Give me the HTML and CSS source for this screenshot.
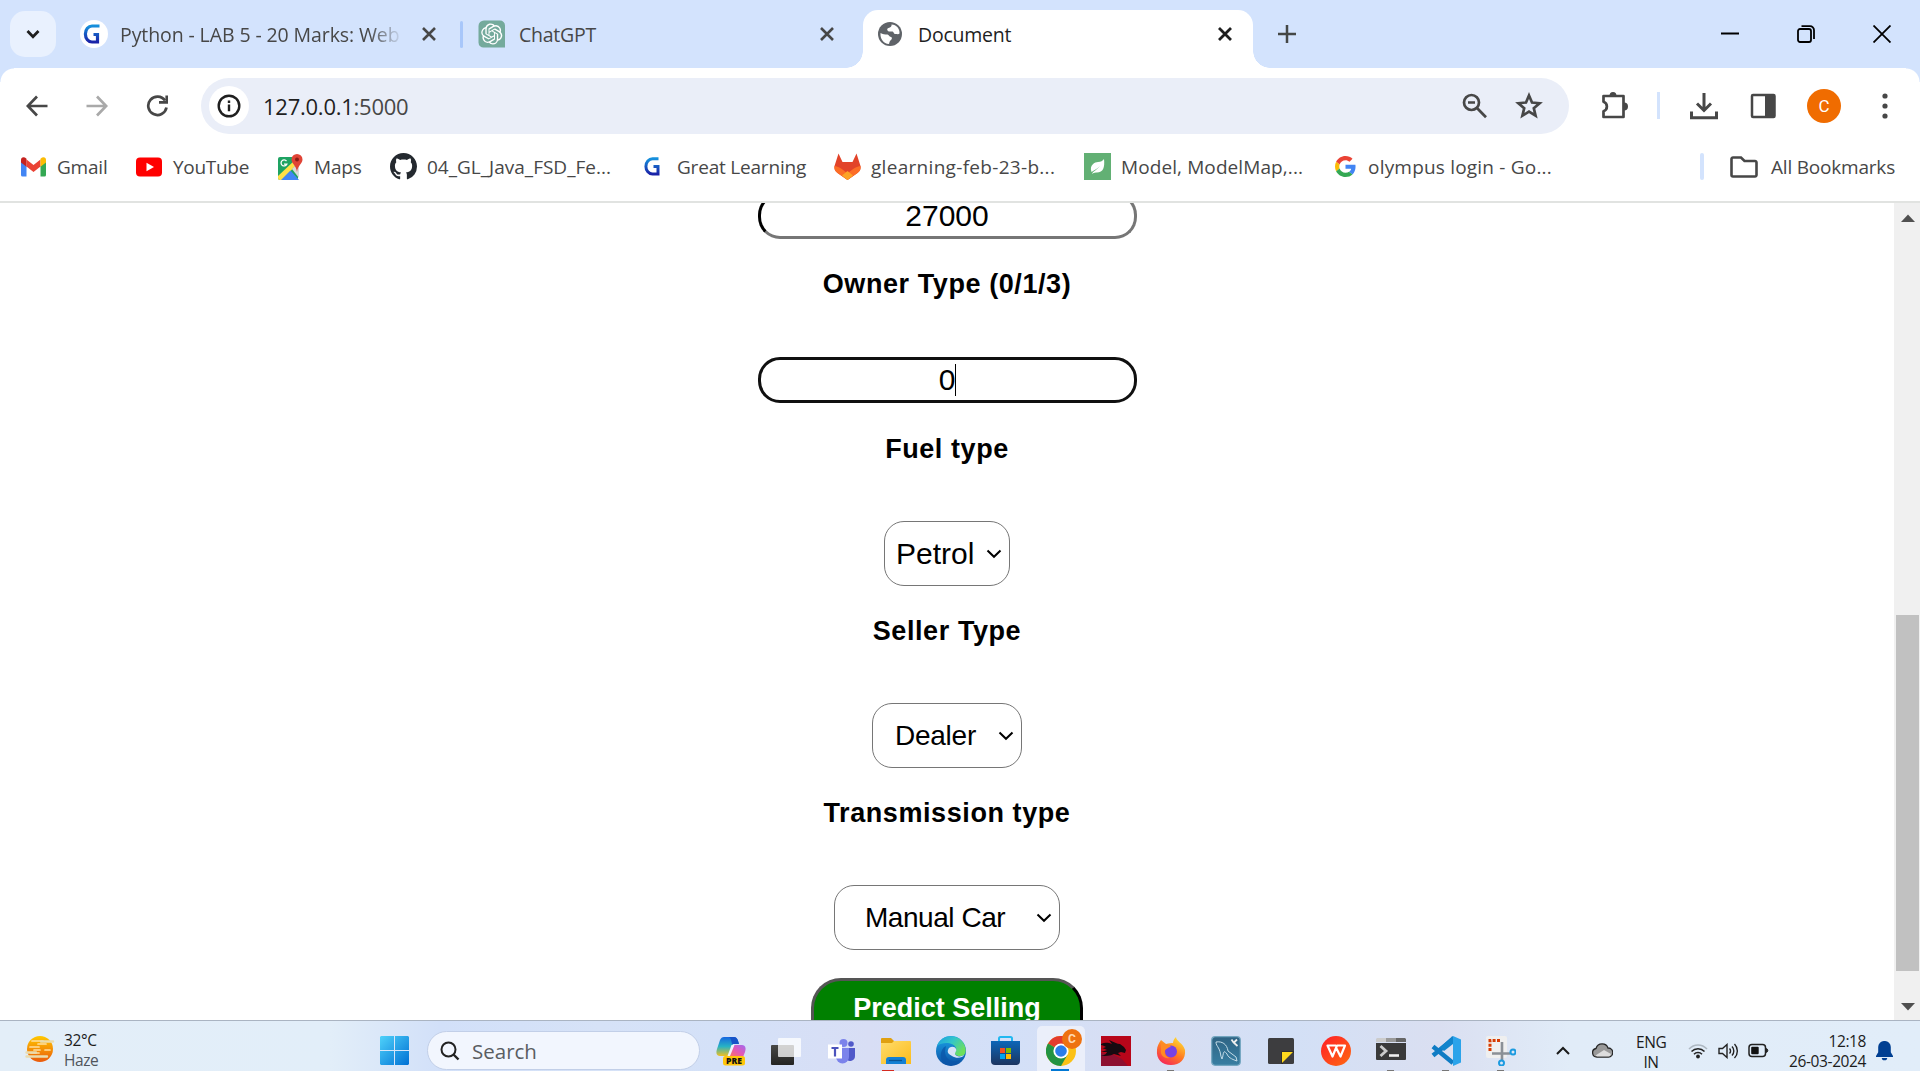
FILE: index.html
```html
<!DOCTYPE html>
<html lang="en">
<head>
<meta charset="utf-8">
<title>Document</title>
<link rel="stylesheet" href="styles.css">
</head>
<body>
<svg width="0" height="0" class="defs">
  <defs>
    <linearGradient id="gl" x1="0" y1="0" x2="0" y2="1"><stop offset="0" stop-color="#1590dc"/><stop offset="1" stop-color="#1a22a8"/></linearGradient>
    <linearGradient id="haze" x1="0" y1="0" x2="0" y2="1"><stop offset="0" stop-color="#ffc800"/><stop offset="1" stop-color="#ea5a0c"/></linearGradient>
    <linearGradient id="win" x1="0" y1="0" x2="1" y2="1"><stop offset="0" stop-color="#4fd2fa"/><stop offset="1" stop-color="#0070d4"/></linearGradient>
    <linearGradient id="cop1" x1="0" y1="0" x2="0" y2="1"><stop offset="0" stop-color="#1767e0"/><stop offset=".5" stop-color="#27b3c4"/><stop offset="1" stop-color="#f0c020"/></linearGradient>
    <linearGradient id="cop2" x1="0" y1="1" x2="1" y2="0"><stop offset="0" stop-color="#ff7a50"/><stop offset=".5" stop-color="#e558b4"/><stop offset="1" stop-color="#a06af0"/></linearGradient>
    <linearGradient id="dark" x1="0" y1="0" x2="0" y2="1"><stop offset="0" stop-color="#484846"/><stop offset="1" stop-color="#242422"/></linearGradient>
    <linearGradient id="fold" x1="0" y1="0" x2="1" y2="1"><stop offset="0" stop-color="#ffdc6c"/><stop offset="1" stop-color="#fbbc1c"/></linearGradient>
    <linearGradient id="edge1" x1="0" y1="0" x2="1" y2=".6"><stop offset="0" stop-color="#1b9de2"/><stop offset=".5" stop-color="#34c6c8"/><stop offset="1" stop-color="#6ee05a"/></linearGradient>
    <linearGradient id="edge2" x1="0" y1="0" x2="0" y2="1"><stop offset="0" stop-color="#1ba3e8"/><stop offset="1" stop-color="#0c50a4"/></linearGradient>
    <linearGradient id="store" x1="0" y1="0" x2="0" y2="1"><stop offset="0" stop-color="#0c66b8"/><stop offset="1" stop-color="#1c3560"/></linearGradient>
    <linearGradient id="ff" x1=".8" y1="0" x2=".2" y2="1"><stop offset="0" stop-color="#ffe234"/><stop offset=".5" stop-color="#ff7d20"/><stop offset="1" stop-color="#f5205c"/></linearGradient>
    <linearGradient id="sea" x1="0" y1="0" x2="0" y2="1"><stop offset="0" stop-color="#2f6484"/><stop offset="1" stop-color="#387ea2"/></linearGradient>
    <linearGradient id="wps" x1="0" y1="0" x2="1" y2="1"><stop offset="0" stop-color="#ff1d28"/><stop offset="1" stop-color="#ff6a10"/></linearGradient>
  </defs>
</svg>

<header class="tabstrip">
  <button class="tab-search"><svg width="16" height="12" viewBox="0 0 16 12"><path d="M2.5 3l5.5 5.700L13.500 3" fill="none" stroke="#1f1f1f" stroke-width="2.800"/></svg></button>
  <div class="tab tab-one">
    <svg class="fav" width="28" height="28" viewBox="0 0 28 28"><circle cx="14" cy="14" r="14" fill="#fff"/><path d="M19.500 6H12a6.600 8 0 0 0 0 16h5.500V14.500h-4" fill="none" stroke="url(#gl)" stroke-width="3.200"/></svg>
    <span class="title faded">Python - LAB 5 - 20 Marks: Web</span>
    <svg class="close" width="16" height="16" viewBox="0 0 16 16"><path d="M2 2l12 12M14 2L2 14"/></svg>
  </div>
  <i class="tab-sep"></i>
  <div class="tab tab-two">
    <svg class="fav" width="28" height="28" viewBox="0 0 28 28"><path d="M6 .5h16a5 5 0 0 1 5 5V27.500H6A5 5 0 0 1 .5 22.500V6A5.500 5.500 0 0 1 6 .5z" fill="#74aa9c"/><path transform="translate(3.200 3.400) scale(.88)" fill="#fff" d="M22.2819 9.8211a5.9847 5.9847 0 0 0-.5157-4.9108 6.0462 6.0462 0 0 0-6.5098-2.9A6.0651 6.0651 0 0 0 4.9807 4.1818a5.9847 5.9847 0 0 0-3.9977 2.9 6.0462 6.0462 0 0 0 .7427 7.0966 5.98 5.98 0 0 0 .511 4.9107 6.051 6.051 0 0 0 6.5146 2.9001A5.9847 5.9847 0 0 0 13.2599 24a6.0557 6.0557 0 0 0 5.7718-4.2058 5.9894 5.9894 0 0 0 3.9977-2.9001 6.0557 6.0557 0 0 0-.7475-7.0729zm-9.022 12.6081a4.4755 4.4755 0 0 1-2.8764-1.0408l.1419-.0804 4.7783-2.7582a.7948.7948 0 0 0 .3927-.6813v-6.7369l2.02 1.1686a.071.071 0 0 1 .038.052v5.5826a4.504 4.504 0 0 1-4.4945 4.4944zm-9.6607-4.1254a4.4708 4.4708 0 0 1-.5346-3.0137l.142.0852 4.783 2.7582a.7712.7712 0 0 0 .7806 0l5.8428-3.3685v2.3324a.0804.0804 0 0 1-.0332.0615L9.74 19.9502a4.4992 4.4992 0 0 1-6.1408-1.6464zM2.3408 7.8956a4.485 4.485 0 0 1 2.3655-1.9728V11.6a.7664.7664 0 0 0 .3879.6765l5.8144 3.3543-2.0201 1.1685a.0757.0757 0 0 1-.071 0l-4.8303-2.7865A4.504 4.504 0 0 1 2.3408 7.872zm16.5963 3.8558L13.1038 8.364 15.1192 7.2a.0757.0757 0 0 1 .071 0l4.8303 2.7913a4.4944 4.4944 0 0 1-.6765 8.1042v-5.6772a.79.79 0 0 0-.407-.667zm2.0107-3.0231l-.142-.0852-4.7735-2.7818a.7759.7759 0 0 0-.7854 0L9.409 9.2297V6.8974a.0662.0662 0 0 1 .0284-.0615l4.8303-2.7866a4.4992 4.4992 0 0 1 6.6802 4.66zM8.3065 12.863l-2.02-1.1638a.0804.0804 0 0 1-.038-.0567V6.0742a4.4992 4.4992 0 0 1 7.3757-3.4537l-.142.0805L8.704 5.459a.7948.7948 0 0 0-.3927.6813zm1.0976-2.3654l2.602-1.4998 2.6069 1.4998v2.9994l-2.5974 1.4997-2.6067-1.4997Z"/></svg>
    <span class="title">ChatGPT</span>
    <svg class="close" width="16" height="16" viewBox="0 0 16 16"><path d="M2 2l12 12M14 2L2 14"/></svg>
  </div>
  <div class="tab tab-active">
    <svg class="fav" width="26" height="26" viewBox="0 0 26 26"><circle cx="13" cy="13" r="12" fill="#5f6368"/><path d="M3.500 12c2 1 4.500 1.500 7 1.500 1.500 0 1.500 2.500 3.500 2.500 1.500.5 1 2 0 3-1.500 1-1.500 2-2 4C6.500 22.500 3 18 3.500 12zM14.500 3.500c.5 2-1 3-3 3.500-2 .500-1.500 3 .5 3.500h3.500c1.500.5 1 2.500 3 2.500s3 .5 4-.5c.5-4.500-3-9-8-9z" fill="#fff"/></svg>
    <span class="title">Document</span>
    <svg class="close" width="16" height="16" viewBox="0 0 16 16"><path d="M2 2l12 12M14 2L2 14"/></svg>
  </div>
  <svg class="new-tab" width="20" height="20" viewBox="0 0 20 20"><path d="M10 1v18M1 10h18" stroke="#444746" stroke-width="2.500"/></svg>
  <div class="win-controls">
    <svg width="18" height="18" viewBox="0 0 18 18"><path d="M0 8.500h18" stroke="#000" stroke-width="2"/></svg>
    <svg width="18" height="18" viewBox="0 0 18 18"><g fill="none" stroke="#000" stroke-width="1.800"><rect x="1" y="4" width="13" height="13" rx="2"/><path d="M4.500 1.200H13a4 4 0 0 1 4 4V14"/></g></svg>
    <svg width="18" height="18" viewBox="0 0 18 18"><path d="M.5.5l17 17M17.500.5l-17 17" stroke="#000" stroke-width="1.800"/></svg>
  </div>
</header>

<nav class="toolbar">
  <div class="nav-buttons">
    <svg width="22" height="22" viewBox="0 0 22 22"><path d="M21.500 11H2.500M11 1.500L1.800 11l9.200 9.500" fill="none" stroke="#474747" stroke-width="2.700"/></svg>
    <svg width="22" height="22" viewBox="0 0 22 22"><path d="M.5 11h19M11 1.500l9.200 9.500-9.200 9.500" fill="none" stroke="#a9a9a9" stroke-width="2.700"/></svg>
    <svg width="22" height="22" viewBox="0 0 22 22"><path d="M19 5.500A9.200 9.200 0 1 0 20.500 12.500" fill="none" stroke="#474747" stroke-width="2.700"/><path d="M13 8.800h9V.5h-2.600v5.600H13z" fill="#474747"/></svg>
  </div>
  <div class="omnibox">
    <span class="site-info"><svg width="24" height="24" viewBox="0 0 24 24"><circle cx="12" cy="12" r="10.300" fill="none" stroke="#1f1f1f" stroke-width="2.400"/><path d="M12 10.500v6.800M12 6.500v2.400" stroke="#1f1f1f" stroke-width="2.400"/></svg></span>
    <span class="url">127.0.0.1<em>:5000</em></span>
    <svg class="lens" width="26" height="26" viewBox="0 0 26 26"><g fill="none" stroke="#474747" stroke-width="2.700"><circle cx="9.500" cy="9.500" r="7.500"/><path d="M15 15l9 9.200M6 9.500h7"/></g></svg>
    <svg width="28" height="28" viewBox="0 0 28 28"><path d="M14 3.500l3 7 7.600.700-5.800 5 1.800 7.500L14 19.700l-6.600 4 1.800-7.500-5.800-5 7.600-.7z" fill="none" stroke="#474747" stroke-width="2.700"/></svg>
  </div>
  <svg class="puzzle" width="30" height="30" viewBox="0 0 30 30"><path d="M4.500 5H24.500V26H4.500V20.200c4.500-1.500 4.500-7.900 0-9.400z" fill="none" stroke="#474747" stroke-width="2.700" stroke-linejoin="round"/><path d="M10.500 5a3.500 4 0 0 1 7 0zM25 11.500a4 4 0 0 1 0 8z" fill="#474747"/></svg>
  <i class="tool-sep"></i>
  <svg class="download" width="28" height="28" viewBox="0 0 28 28"><path d="M14 1v17M7 11.500l7 7 7-7M1.500 19.500v6.300h25v-6.300" fill="none" stroke="#474747" stroke-width="3"/></svg>
  <svg class="panel" width="26" height="26" viewBox="0 0 26 26"><rect x="2" y="2" width="22.500" height="22" rx="1" fill="none" stroke="#474747" stroke-width="2.500"/><path d="M15 2h9v22h-9z" fill="#474747"/></svg>
  <span class="avatar">C</span>
  <svg class="menu" width="6" height="26" viewBox="0 0 6 26"><g fill="#474747"><circle cx="3" cy="3" r="2.600"/><circle cx="3" cy="13" r="2.600"/><circle cx="3" cy="23" r="2.600"/></g></svg>
</nav>

<nav class="bookmarks">
  <a class="bm gmail"><svg width="25" height="20" viewBox="0 0 25 20"><path d="M0 4v14a1.500 1.500 0 0 0 1.500 1.500H5.500V9z" fill="#4285f4"/><path d="M25 4v14a1.500 1.500 0 0 1-1.500 1.500H19.500V9z" fill="#34a853"/><path d="M5.500 2.500l7 5.500 7-5.500V9.500l-7 5.500-7-5.500z" fill="#ea4335"/><path d="M0 3c0-3 3-3.500 5.500-1.200v8L0 5.500z" fill="#c5221f"/><path d="M25 3c0-3-3-3.500-5.500-1.200v8L25 5.500z" fill="#fbbc04"/></svg>Gmail</a>
  <a class="bm youtube"><svg width="26" height="20" viewBox="0 0 26 20"><rect width="26" height="19" y=".5" rx="4" fill="#f00"/><path d="M10.500 5.800v8.400L18 10z" fill="#fff"/></svg>YouTube</a>
  <a class="bm maps"><svg width="25" height="26" viewBox="0 0 25 26"><path d="M2 3h18v21a2 2 0 0 1-2 2H2a2 2 0 0 1-2-2V5a2 2 0 0 1 2-2z" fill="#1ea362"/><path d="M0 22L17 6l3 3L4 26H2a2 2 0 0 1-2-2z" fill="#ffe047"/><path d="M3 26l9.500-9.500L21 26z" fill="#4285f4"/><path d="M14 15l7-7v16z" fill="#dadada"/><path d="M19 0a5.500 5.500 0 0 1 5.500 5.500C24.500 10 19.800 11 19 18c-.8-7-5.500-8-5.500-12.500A5.500 5.500 0 0 1 19 0z" fill="#e04436"/><circle cx="19" cy="5.500" r="2" fill="#8c1c14"/><path d="M8.500 7.200a3 3 0 1 0 .3 3H6" fill="none" stroke="#fff" stroke-width="1.300"/></svg>Maps</a>
  <a class="bm github"><svg width="27" height="27" viewBox="0 0 16 16"><path fill="#24292f" d="M8 0C3.580 0 0 3.580 0 8c0 3.540 2.290 6.530 5.470 7.590.4.070.55-.17.55-.38 0-.19-.01-.82-.01-1.490-2.010.37-2.530-.49-2.690-.94-.09-.23-.48-.94-.82-1.130-.28-.15-.68-.52-.01-.53.63-.01 1.080.58 1.230.82.720 1.210 1.870.87 2.330.66.070-.52.280-.87.510-1.070-1.780-.2-3.640-.89-3.640-3.950 0-.87.310-1.590.82-2.150-.08-.2-.36-1.020.080-2.120 0 0 .67-.21 2.200.82.640-.18 1.320-.27 2-.27s1.360.09 2 .27c1.530-1.040 2.200-.82 2.200-.82.440 1.100.16 1.920.08 2.120.51.560.82 1.270.82 2.150 0 3.070-1.870 3.750-3.650 3.950.29.250.54.730.54 1.480 0 1.070-.01 1.930-.01 2.200 0 .21.150.46.55.38A8.010 8.010 0 0 0 16 8c0-4.420-3.580-8-8-8z"/></svg>04_GL_Java_FSD_Fe...</a>
  <a class="bm great"><svg width="17" height="19" viewBox="0 0 17 19"><path d="M14.500 1.800H8.500a6.500 7.500 0 0 0 0 15.200H14V9.500H9.500" fill="none" stroke="url(#gl)" stroke-width="3"/></svg>Great Learning</a>
  <a class="bm gitlab"><svg width="27" height="27" viewBox="0 0 27 27"><path d="M4.500.5L8.500 9h10L22.500.5 26.500 13c.5 3-.5 5-3 7l-10 7-10-7c-2.500-2-3.500-4-3-7z" fill="#e24329"/><path d="M.5 13c4 .500 7 2.500 13 7.500C19.500 15.500 22.500 13.500 26.500 13c.5 3-.5 5-3 7l-10 7-10-7c-2.500-2-3.500-4-3-7z" fill="#fc6d26"/><path d="M8 22.500l5.500-4.500 5.500 4.500-5.500 4.500z" fill="#fca326"/></svg>glearning-feb-23-b...</a>
  <a class="bm model"><svg width="27" height="27" viewBox="0 0 27 27"><path d="M0 0h27v27H0z" fill="#62b074"/><path d="M20 6c1 9-1 14-8 13.500-2 0-3 1-4 1.500 1-3 5-4 8-8-3 3-6 4-8.500 6C5 12 11 9 14 9s4.500-1 6-3z" fill="#fff"/></svg>Model, ModelMap,...</a>
  <a class="bm google"><svg width="21" height="21" viewBox="0 0 48 48"><path fill="#EA4335" d="M24 9.500c3.540 0 6.710 1.220 9.210 3.600l6.850-6.850C35.900 2.380 30.470 0 24 0 14.620 0 6.510 5.380 2.560 13.220l7.980 6.190C12.430 13.720 17.740 9.500 24 9.500z"/><path fill="#4285F4" d="M46.980 24.550c0-1.570-.15-3.090-.38-4.550H24v9.020h12.940c-.58 2.960-2.260 5.480-4.780 7.180l7.730 6c4.510-4.180 7.090-10.360 7.090-17.650z"/><path fill="#FBBC05" d="M10.530 28.590c-.48-1.450-.76-2.990-.76-4.590s.27-3.140.76-4.590l-7.980-6.190C.92 16.460 0 20.120 0 24c0 3.880.92 7.540 2.560 10.780l7.970-6.190z"/><path fill="#34A853" d="M24 48c6.480 0 11.930-2.130 15.890-5.810l-7.730-6c-2.150 1.450-4.920 2.300-8.160 2.300-6.260 0-11.570-4.220-13.470-9.910l-7.980 6.190C6.510 42.620 14.620 48 24 48z"/></svg>olympus login - Go...</a>
  <i class="bm-sep"></i>
  <a class="bm all"><svg width="28" height="22" viewBox="0 0 28 22"><path d="M1.500 3a1.500 1.500 0 0 1 1.500-1.500h8l3.500 3.500h10.500a1.500 1.500 0 0 1 1.500 1.500V19a1.500 1.500 0 0 1-1.500 1.500H3A1.500 1.500 0 0 1 1.500 19z" fill="none" stroke="#474747" stroke-width="2.600"/></svg>All Bookmarks</a>
</nav>

<main class="viewport">
  <form class="form">
    <div class="field">27000</div>
    <h3>Owner Type (0/1/3)</h3>
    <div class="field focused">0<i class="caret"></i></div>
    <h3>Fuel type</h3>
    <div class="select petrol"><span>Petrol</span><svg width="16" height="10" viewBox="0 0 16 10"><path d="M1.500 1.500L8 7.800l6.500-6.300"/></svg></div>
    <h3>Seller Type</h3>
    <div class="select dealer"><span>Dealer</span><svg width="16" height="10" viewBox="0 0 16 10"><path d="M1.500 1.500L8 7.800l6.500-6.300"/></svg></div>
    <h3>Transmission type</h3>
    <div class="select manual"><span>Manual Car</span><svg width="16" height="10" viewBox="0 0 16 10"><path d="M1.500 1.500L8 7.800l6.500-6.300"/></svg></div>
    <div class="submit">Predict Selling</div>
  </form>
  <div class="scrollbar">
    <svg width="14" height="8" viewBox="0 0 14 8"><path d="M0 8l7-7.500L14 8z" fill="#505050"/></svg>
    <i class="thumb"></i>
    <svg width="14" height="8" viewBox="0 0 14 8"><path d="M0 0l7 7.500L14 0z" fill="#505050"/></svg>
  </div>
</main>

<footer class="taskbar">
  <div class="weather">
    <svg width="30" height="28" viewBox="0 0 30 28"><circle cx="15" cy="14" r="13" fill="url(#haze)"/><g stroke="#ffe0a0" stroke-width="1.700" stroke-linecap="round"><path d="M7 6h11M13 9h8M5 12h9M9 15h6M20 15h5M6 18h8"/></g><g stroke="#eadcae" stroke-width="2.400" stroke-linecap="round"><path d="M16 6.500h12M1.500 17.500H11M1.500 21.500H22"/></g></svg>
    <p>32°C<br><span>Haze</span></p>
  </div>
  <svg class="start" width="29" height="29" viewBox="0 0 29 29"><path d="M1 0h13v14H0V1zM15 0h13l1 1v13H15zM0 15h14v14H1l-1-1zM15 15h14v13l-1 1H15z" fill="url(#win)"/></svg>
  <div class="search"><svg width="20" height="20" viewBox="0 0 20 20"><circle cx="8.500" cy="8.500" r="7" fill="none" stroke="#222" stroke-width="2"/><path d="M13.500 13.500l5 5" stroke="#222" stroke-width="2.400"/></svg>Search</div>
  <div class="apps">
    <span><svg width="30" height="30" viewBox="0 0 30 30"><path d="M8 1h10c3 0 4 3 5 7h-6l-5 12H4c-4 0-4-4-3-7L4 4c1-2 2-3 4-3z" fill="url(#cop1)"/><path d="M13 1h5c3 0 4 3 5 7h-7c-1-4-1-6-3-7z" fill="#1753c8"/><path d="M18 9h8c4 0 4 4 3 7l-2 5H12z" fill="url(#cop2)"/><path d="M15.500 9h3l-4.500 11h-2.500z" fill="#eef2fc"/><rect x="7" y="20" width="22" height="9.500" rx="2.500" fill="#ffc60a"/><text x="18" y="28" text-anchor="middle" class="pre">PRE</text></svg></span>
    <span><svg width="30" height="30" viewBox="0 0 30 30"><rect x="0" y="9" width="23" height="20" rx="1" fill="url(#dark)"/><rect x="7" y="2" width="23" height="19" rx="1" fill="#fff" opacity=".76"/></svg></span>
    <span><svg width="28" height="28" viewBox="0 0 28 28"><circle cx="16.500" cy="6" r="4" fill="#7b83eb"/><circle cx="24" cy="7" r="2.800" fill="#5059c9"/><path d="M19 11h9v8a5 5 0 0 1-9 3z" fill="#5059c9"/><path d="M9 11h13v9a6.500 6.500 0 0 1-13 0z" fill="#7b83eb"/><path d="M1 7.500h14v14H1z" fill="#fff"/><path d="M4.500 11h7M8 11v8.500" stroke="#4b53bc" stroke-width="2.200"/></svg></span>
    <span class="attention"><svg width="30" height="28" viewBox="0 0 30 28"><path d="M0 2a1 1 0 0 1 1-1h9l3 3v8H0z" fill="#e0a010"/><path d="M13 4h16a1 1 0 0 1 1 1v22H0V6h11z" fill="url(#fold)"/><path d="M5 27v-4a3 3 0 0 1 3-3h14a3 3 0 0 1 3 3v4z" fill="#1480d4"/><path d="M8 23.500h13" stroke="#0b5494" stroke-width="1.300"/></svg></span>
    <span><svg width="30" height="30" viewBox="0 0 30 30"><circle cx="15" cy="15" r="15" fill="url(#edge2)"/><path d="M1 10C5-1 18-2 25 4c5 5 6 12 3 15-3 2-8 1-9-1s2-3 1-6C18 7 8 5 1 10z" fill="url(#edge1)"/><path d="M12 14c1-4 7-4 8-1 1 2-1 3-1 5 1 3 6 3 9 1-1 3-8 4-12 1-3-2-5-3-4-6z" fill="#d7e3f7"/><path d="M9 15c0 8 6 12 15 9-4 7-17 8-19-2-1-5 1-10 5-12z" fill="#0b56a8" opacity=".75"/></svg></span>
    <span><svg width="29" height="30" viewBox="0 0 29 30"><path d="M8 6V2.500A1.500 1.500 0 0 1 9.500 1h10A1.500 1.500 0 0 1 21 2.500V6" fill="none" stroke="#22b8f0" stroke-width="2"/><path d="M0 5h29v20a4 4 0 0 1-4 4H4a4 4 0 0 1-4-4z" fill="url(#store)"/><path d="M9 12h5v5H9z" fill="#f25022"/><path d="M15 12h5v5h-5z" fill="#7fba00"/><path d="M9 18h5v5H9z" fill="#00a4ef"/><path d="M15 18h5v5h-5z" fill="#ffb900"/></svg></span>
    <span class="current"><svg width="30" height="30" viewBox="0 0 30 30"><circle cx="15" cy="15" r="15" fill="#fbc116"/><path d="M15 15L2 7.500A15 15 0 0 1 28 7.500z" fill="#e33b2e"/><path d="M15 15L2 7.500A15 15 0 0 0 15 30l6.500-11.200z" fill="#229342"/><circle cx="15" cy="15" r="7.600" fill="#fff"/><circle cx="15" cy="15" r="5.800" fill="#2a7de9"/></svg><b>C</b></span>
    <span><svg width="30" height="30" viewBox="0 0 30 30"><path d="M0 0h30v30H0z" fill="#b8061a"/><path d="M0 17l13 2 8 4 6 7H0z" fill="#8d1030"/><path d="M0 8c4-2 8-1 11 0l-3-4c5 2 8 4 11 4l4 3 2 3-1 3-4-1-3 1 3 3-7-2c-4 2-8 2-13 2 4-1 5-2 6-4H0l6-2c-2-1-4-2-6-1l5-2c-2-1-3-2-5-2z" fill="#160a10"/></svg></span>
    <span class="open"><svg width="30" height="30" viewBox="0 0 30 30"><path d="M5 4l5 4c3-1 5-1 7-1 0-3 2-5 3-6 0 4 7 6 9 13 1 9-5 15-14 15S0 23 1 14c0-4 2-7 4-10z" fill="url(#ff)"/><circle cx="15" cy="15.500" r="6" fill="#7542e5"/><path d="M5 8c4-1 8 0 10 3-3 0-4 2-6 3-1 4 1 7 5 8-6 1-10-3-9-8z" fill="#ff8a22"/></svg></span>
    <span><svg width="30" height="30" viewBox="0 0 30 30"><rect x=".7" y=".7" width="28.600" height="28.600" rx="3.500" fill="url(#sea)" stroke="#73a6c0" stroke-width="1.200"/><path d="M5 6c6-1 11 2 12 9l8 6 1 4c-6-2-9-4-10-7-2-2-2-3-3-2s-1 5-2 7c-2-4-1-6-3-10S5 9 5 6z" fill="none" stroke="#c4dce8" stroke-width="1"/><path d="M20.500 3.500l2 3 4 3.500M26 3.500l-3 3" stroke="#eee" stroke-width="1.800" fill="none"/></svg></span>
    <span><svg width="26" height="28" viewBox="0 0 26 28"><rect y="1" width="26" height="26" rx="1.500" fill="#3d3d3f"/><path d="M13.500 27V14.500H26v1H14.800V27z" fill="#222"/><path d="M14 15H25L14 26z" fill="#ffd91e"/></svg></span>
    <span><svg width="30" height="30" viewBox="0 0 30 30"><circle cx="15" cy="15" r="15" fill="url(#wps)"/><path d="M15 9.500H6.500L11.500 20.500 16 9.500H24L19.500 20.500 15.500 12.500" fill="none" stroke="#fff" stroke-width="2.200" stroke-linejoin="round"/></svg></span>
    <span class="open"><svg width="30" height="26" viewBox="0 0 30 26"><path d="M0 5h30v16a1 1 0 0 1-1 1H1a1 1 0 0 1-1-1z" fill="#3a3a3a"/><path d="M1 0h9v4H0V1z" fill="#ccc"/><path d="M10 0h10v4H10z" fill="#999"/><path d="M20 0h9l1 1v3H20z" fill="#666"/><path d="M4.500 8l5.500 5-5.500 5" fill="none" stroke="#ccc" stroke-width="2.800"/><path d="M13 17.500h10" stroke="#eee" stroke-width="2.600"/></svg></span>
    <span class="open"><svg width="30" height="30" viewBox="0 0 30 30"><path d="M2 10.500L22 27M2 19.500L22 3" stroke="#0f7cc4" stroke-width="4.500" fill="none"/><path d="M22 0l8 3.500v23L22 30z" fill="#2ba3ea"/><path d="M22 0v8l-9 7-4-3.500L21 .5z" fill="#1184cc"/></svg></span>
    <span class="open"><svg width="30" height="30" viewBox="0 0 30 30"><rect width="21" height="22" rx="2" fill="#efefef"/><path d="M14 4.500H4V15" fill="none" stroke="#d83b01" stroke-width="3" stroke-dasharray="3 1.400"/><path d="M16 6v18M6 17.500h18" stroke="#8b9096" stroke-width="2.600"/><g fill="none" stroke="#1c9be0" stroke-width="2"><circle cx="27" cy="16" r="2.500"/><circle cx="15.500" cy="27" r="2.500"/></g></svg></span>
  </div>
  <div class="tray">
    <svg class="t-up" width="14" height="9" viewBox="0 0 14 9"><path d="M1 8l6-6 6 6" fill="none" stroke="#1a1a1a" stroke-width="2"/></svg>
    <svg class="t-cloud" width="21" height="15" viewBox="0 0 21 15"><path d="M5 14A4.300 4.300 0 0 1 4 5.500C6-.5 14-.5 16 5a4.300 4.300 0 0 1 .5 9z" fill="#999" stroke="#252525" stroke-width="1.300"/><path d="M3.500 12.500L12 7l7 4c-1 2-1 2.500-3 2.500H5z" fill="#ddd"/></svg>
    <p class="t-lang">ENG<br>IN</p>
    <svg class="t-wifi" width="20" height="16" viewBox="0 0 20 16"><g fill="none" stroke="#222" stroke-width="1.500"><path d="M1 6C6 .5 14 .5 19 6" stroke="#aeb8c2"/><path d="M3.500 8.500a9 9 0 0 1 13 0M6 11.200a5.500 5.500 0 0 1 8 0"/></g><circle cx="10" cy="13.500" r="1.900" fill="#222"/></svg>
    <svg class="t-vol" width="21" height="16" viewBox="0 0 21 16"><g fill="none" stroke="#222" stroke-width="1.400"><path d="M1 5.500h3.500L9 1.500v13L4.500 10.500H1z"/><path d="M11.500 5.500a3.500 3.500 0 0 1 0 5M14 3.500a6.500 6.500 0 0 1 0 9M16.500 1a10 10 0 0 1 0 14"/></g></svg>
    <svg class="t-bat" width="21" height="15" viewBox="0 0 21 15"><rect x="1" y="1.500" width="16.500" height="12" rx="3" fill="none" stroke="#222" stroke-width="1.500"/><rect x="3.200" y="3.800" width="7.500" height="7.500" rx="1" fill="#111"/><path d="M18.500 5.500a2.200 2.200 0 0 1 0 4z" fill="#222" stroke="#222"/></svg>
    <p class="t-clock">12:18<br>26-03-2024</p>
    <svg class="t-bell" width="17" height="20" viewBox="0 0 17 20"><path d="M8.500 0a6 6 0 0 1 6.300 6.300v5L17 15v1H0v-1l2.200-3.700v-5A6 6 0 0 1 8.500 0zM5.800 17h5.400a2.700 2.300 0 0 1-5.400 0z" fill="#003f92"/></svg>
  </div>
</footer>
</body>
</html>
```
FILE: styles.css
```css
* { box-sizing: border-box; }
body {
  margin: 0;
  width: 1920px;
  height: 1071px;
  overflow: hidden;
  display: flex;
  flex-direction: column;
  background: #fff;
  font-family: "Open Sans", "Noto Sans", sans-serif;
  color: #474747;
}
svg { display: block; flex: none; }
i { flex: none; display: block; }
.defs { position: absolute; }

/* Tab strip */
.tabstrip {
  flex: none;
  display: flex;
  align-items: center;
  height: 68px;
  padding-left: 10px;
  background: #d3e3fd;
}
.tab-search {
  display: flex;
  align-items: center;
  justify-content: center;
  width: 46px;
  height: 46px;
  padding: 0;
  border: 0;
  border-radius: 15px;
  background: #e9f1fe;
}
.tab { display: flex; align-items: center; }
.title {
  font-size: 19.500px;
  letter-spacing: -0.250px;
  white-space: nowrap;
  line-height: 28px;
  padding-top: 1px;
}
.close path { stroke: #474747; stroke-width: 2.600; }
.tab-one { width: 380px; margin-left: 24px; }
.tab-one .title { width: 283px; margin: 0 18px 0 12px; overflow: hidden; letter-spacing: -0.100px; }
.faded { -webkit-mask-image: linear-gradient(90deg, #000 88%, transparent 100%); mask-image: linear-gradient(90deg, #000 88%, transparent 100%); }
.tab-sep { width: 3px; height: 27px; margin-right: 15px; background: #a8c7fa; border-radius: 2px; }
.tab-two { width: 385px; padding-right: 28px; }
.tab-two .title { flex: 1; margin-left: 13px; }
.tab-active {
  position: relative;
  align-self: flex-end;
  width: 390px;
  height: 58px;
  padding: 0 20px 10px 14px;
  border-radius: 15px 15px 0 0;
  background: #fff;
}
.tab-active::before, .tab-active::after {
  content: "";
  position: absolute;
  bottom: 0;
  width: 17px;
  height: 17px;
}
.tab-active::before { left: -17px; background: radial-gradient(circle at 0 0, transparent 16.500px, #fff 17px); }
.tab-active::after { right: -17px; background: radial-gradient(circle at 100% 0, transparent 16.500px, #fff 17px); }
.tab-active .title { flex: 1; margin-left: 15px; color: #1f1f1f; }
.tab-active .close path { stroke: #1f1f1f; stroke-width: 2.800; }
.new-tab { margin-left: 24px; }
.win-controls { display: flex; gap: 58px; margin: 0 29px 0 auto; }

/* Toolbar */
.toolbar {
  flex: none;
  display: flex;
  align-items: center;
  height: 65px;
  padding: 10px 0 0 26px;
  background: #fff;
  position: relative;
}
.toolbar::before, .toolbar::after { content: ""; position: absolute; top: 0; width: 14px; height: 14px; }
.toolbar::before { left: 0; background: radial-gradient(circle at 100% 100%, transparent 13px, #d3e3fd 14px); }
.toolbar::after { right: 0; background: radial-gradient(circle at 0 100%, transparent 13px, #d3e3fd 14px); }
.nav-buttons { display: flex; gap: 38px; width: 175px; }
.omnibox {
  display: flex;
  align-items: center;
  width: 1368px;
  height: 56px;
  padding: 0 26px 0 8px;
  border-radius: 28px;
  background: #eaeef8;
}
.site-info { display: flex; align-items: center; justify-content: center; width: 40px; height: 40px; border-radius: 50%; background: #fff; }
.url { flex: 1; margin-left: 14px; font-size: 22px; letter-spacing: -0.250px; color: #1f1f1f; }
.url em { font-style: normal; color: #474747; }
.lens { margin-right: 27px; }
.puzzle { margin-left: 30px; }
.tool-sep { width: 3px; height: 27px; margin: 0 30px 0 28px; background: #d3e3fd; }
.panel { margin-left: 32px; }
.avatar {
  width: 34px;
  height: 34px;
  margin: 0 41px 0 31px;
  border-radius: 50%;
  background: #f06c00;
  color: #fff;
  font: 17px/34px Roboto, sans-serif;
  text-align: center;
}

/* Bookmarks */
.bookmarks {
  flex: none;
  display: flex;
  align-items: center;
  height: 70px;
  padding: 0 0 1px 21px;
  border-bottom: 2px solid #e1e3e1;
  font-size: 19px;
  letter-spacing: -0.200px;
  white-space: nowrap;
}
.bm { display: flex; align-items: center; flex: none; gap: 11px; }
.gmail { width: 115px; }
.youtube { width: 142px; letter-spacing: -0.300px; }
.maps { width: 112px; }
.github { width: 254px; gap: 10px; letter-spacing: 0; }
.great { width: 190px; gap: 16px; }
.gitlab { width: 250px; gap: 10px; letter-spacing: 0.300px; }
.model { width: 251px; gap: 10px; letter-spacing: 0.100px; }
.google { width: 365px; gap: 12px; letter-spacing: 0.200px; }
.bm-sep { width: 4px; height: 27px; margin-right: 26px; background: #d3e3fd; border-radius: 2px; }
.all { gap: 13px; }

/* Page */
.viewport { flex: none; display: flex; height: 817px; overflow: hidden; }
.form {
  flex: 1;
  display: flex;
  flex-direction: column;
  align-items: center;
  font-family: "Liberation Sans", Arial, sans-serif;
  color: #000;
}
.form > * { flex: none; }
.form h3 { margin: 30px 0 57px; font-size: 27px; line-height: 30px; letter-spacing: 0.580px; font-weight: bold; }
.field {
  display: flex;
  align-items: center;
  justify-content: center;
  width: 379px;
  height: 46px;
  margin-top: -10px;
  border: 3px inset #767676;
  border-color: #222 #767676 #767676 #222;
  border-radius: 22px;
  font-size: 30px;
}
.field + h3 { margin: 30px 0 58px; }
.focused { margin-top: 0; border: 3px solid #101010; }
.focused + h3 { margin: 31px 0 57px; }
.caret { width: 1px; height: 32px; margin-right: -1px; background: #000; }
.select {
  display: flex;
  align-items: center;
  justify-content: space-between;
  height: 65px;
  padding: 0 7px 0 24px;
  border: 1px solid #767676;
  border-radius: 20px;
  font-size: 28px;
  letter-spacing: -0.250px;
}
.select path { fill: none; stroke: #000; stroke-width: 2; }
.petrol { width: 126px; padding-left: 11px; font-size: 30px; letter-spacing: 0; }
.dealer { width: 150px; padding-left: 22px; }
.manual { width: 226px; padding-left: 30px; letter-spacing: -0.450px; }
.submit {
  width: 272px;
  height: 90px;
  margin-top: 28px;
  padding-top: 9px;
  border: 3px solid;
  border-color: #555 #000 #000 #555;
  border-radius: 30px;
  background: #008000;
  color: #fff;
  font-weight: bold;
  font-size: 27px;
  line-height: 36px;
  text-align: center;
}
.scrollbar {
  display: flex;
  flex-direction: column;
  align-items: center;
  width: 26px;
  padding: 11px 0 9px 1px;
  background: #f0f0f0;
}
.thumb { width: 23px; height: 356px; margin: 393px 0 auto; background: #c1c1c1; }

/* Taskbar */
.taskbar {
  flex: none;
  display: flex;
  height: 51px;
  border-top: 1px solid #aab4c2;
  background: linear-gradient(90deg, #e3eef8 0, #e2eef9 330px, #d2e0f9 440px, #d6e2f7 600px, #d4e1f8 720px, #d8def5 870px, #d3e0f8 1000px, #d8def2 1150px, #d3e0f6 1290px, #dadff1 1440px, #e1ecf8 1570px, #e1edf9 100%);
  color: #1c1c1c;
  font-size: 15.500px;
  line-height: 20px;
}
.taskbar p { margin: 0; letter-spacing: -0.400px; }
.weather { display: flex; gap: 9px; width: 355px; padding: 9px 0 0 25px; }
.weather svg { margin-top: 5px; }
.weather span { color: #50555c; }
.start { margin: 15px 18px 0 0; }
.weather + .start { margin-left: 25px; }
.search {
  display: flex;
  align-items: center;
  gap: 12px;
  width: 273px;
  height: 39px;
  margin-top: 10px;
  padding-left: 12px;
  border: 1px solid #c2cfe8;
  border-radius: 20px;
  background: #f2f6fe;
  color: #5a5d62;
  font-size: 20.500px;
  letter-spacing: 0;
}
.apps { display: flex; margin-left: 3px; }
.apps span { position: relative; display: flex; justify-content: center; align-items: center; width: 55px; height: 50px; padding-top: 9px; }
.pre { font: 900 8.500px "Open Sans", sans-serif; fill: #111; }
.apps .open::after, .apps .attention::after, .apps .current::after {
  content: "";
  position: absolute;
  bottom: 0;
  left: 24px;
  width: 7px;
  height: 1px;
  background: #777;
}
.apps .attention::after { left: 14px; width: 12px; background: #d42a20; }
.apps .current::after { left: 18px; width: 18px; height: 2px; background: #0078d4; }
.apps .current::before { content: ""; position: absolute; inset: 5px 3px 0 4px; border-radius: 5px 5px 0 0; background: #ebeffa; }
.current svg { position: relative; }
.apps .current b {
  position: absolute;
  left: 29px;
  top: 8px;
  width: 20px;
  height: 20px;
  border-radius: 50%;
  background: #ee7210;
  color: #ffd9b0;
  font: bold 12px/20px Roboto, sans-serif;
  text-align: center;
}
.tray { display: flex; align-items: center; flex: none; margin-left: 28px; padding-top: 9px; height: 50px; }
.tray p { align-self: flex-start; white-space: nowrap; }
.t-cloud { margin-left: 22px; }
.tray .t-lang { width: 30px; margin: 2px 0 0 23px; text-align: center; }
.t-wifi { margin-left: 22px; }
.t-vol { margin-left: 10px; }
.t-bat { margin-left: 9px; }
.tray .t-clock { width: 80px; margin: 1px 0 0 17px; text-align: right; }
.t-bell { margin-left: 10px; }
```
